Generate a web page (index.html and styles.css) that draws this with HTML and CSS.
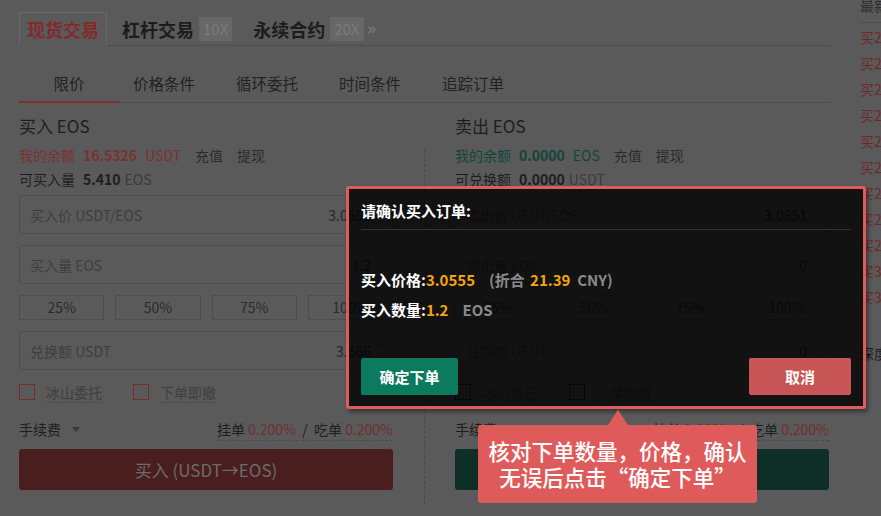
FILE: index.html
```html
<!DOCTYPE html>
<html lang="zh">

<head>
    <meta charset="utf-8">
    <meta name="viewport" content="width=device-width, initial-scale=1.0">
    <title>币币交易</title>
    <link rel="stylesheet" href="styles.css">
</head>

<body>
    <div class="page">
        <div class="trade">
            <div class="market-tabs">
                <div class="mtab on">现货交易</div>
                <div class="mtab">杠杆交易<span class="lev">10X</span></div>
                <div class="mtab wide">永续合约<span class="lev">20X</span><span class="more">»</span></div>
            </div>

            <div class="order-tabs">
                <div class="otab on">限价</div>
                <div class="otab">价格条件</div>
                <div class="otab">循环委托</div>
                <div class="otab">时间条件</div>
                <div class="otab">追踪订单</div>
            </div>

            <div class="forms">
                <section class="form buy">
                    <h2>买入 EOS</h2>
                    <p class="bal"><span class="lbl">我的余额</span><b>16.5326</b><span class="unit">USDT</span><a>充值</a><a>提现</a></p>
                    <p class="avail">可买入量<b>5.410</b><span class="grey">EOS</span></p>
                    <div class="field"><span class="ph">买入价 USDT/EOS</span><span class="val">3.0555</span><span class="spin"></span></div>
                    <div class="field"><span class="ph">买入量 EOS</span><span class="val">1.2</span><span class="spin"></span></div>
                    <div class="pcts"><span>25%</span><span>50%</span><span>75%</span><span>100%</span></div>
                    <div class="field"><span class="ph">兑换额 USDT</span><span class="val">3.666</span><span class="spin"></span></div>
                    <div class="checks">
                        <label><i></i><span>冰山委托</span></label>
                        <label><i></i><span>下单即撤</span></label>
                    </div>
                    <div class="fee">
                        <span class="fee-l">手续费<em></em></span>
                        <span class="fee-r">挂单 <span class="pc">0.200%</span> &nbsp;/&nbsp; 吃单 <span class="pc">0.200%</span></span>
                    </div>
                    <button class="submit">买入 (USDT→EOS)</button>
                </section>

                <div class="sep"></div>

                <section class="form sell">
                    <h2>卖出 EOS</h2>
                    <p class="bal"><span class="lbl">我的余额</span><b>0.0000</b><span class="unit">EOS</span><a>充值</a><a>提现</a></p>
                    <p class="avail">可兑换额<b>0.0000</b><span class="grey">USDT</span></p>
                    <div class="field"><span class="ph">卖出价 USDT/EOS</span><span class="val">3.0851</span><span class="spin"></span></div>
                    <div class="field"><span class="ph">卖出量 EOS</span><span class="val">0</span><span class="spin"></span></div>
                    <div class="pcts"><span>25%</span><span>50%</span><span>75%</span><span>100%</span></div>
                    <div class="field"><span class="ph">兑换额 USDT</span><span class="val">0</span><span class="spin"></span></div>
                    <div class="checks">
                        <label><i></i><span>冰山委托</span></label>
                        <label><i></i><span>下单即撤</span></label>
                    </div>
                    <div class="fee">
                        <span class="fee-l">手续费<em></em></span>
                        <span class="fee-r">挂单 <span class="pc">0.200%</span> &nbsp;/&nbsp; 吃单 <span class="pc">0.200%</span></span>
                    </div>
                    <button class="submit">卖出 (EOS→USDT)</button>
                </section>
            </div>
        </div>

        <aside class="latest">
            <div class="latest-head">最新成交</div>
            <ul>
                <li>买2.9871</li>
                <li>买2.9873</li>
                <li>买2.9880</li>
                <li>买2.9885</li>
                <li>买2.9890</li>
                <li>买2.9902</li>
                <li>买2.9911</li>
                <li>买2.9930</li>
                <li>买2.9954</li>
                <li>买3.0012</li>
                <li>买3.0555</li>
            </ul>
            <div class="depth">深度</div>
        </aside>
    </div>

    <div class="confirm">
        <h3>请确认买入订单:</h3>
        <p class="line">买入价格:<span class="num">3.0555</span><span class="cny">(折合 <span class="num">21.39</span>&nbsp;&nbsp;CNY)</span></p>
        <p class="line">买入数量:<span class="num">1.2</span><span class="cny">EOS</span></p>
        <div class="actions">
            <button class="ok">确定下单</button>
            <button class="cancel">取消</button>
        </div>
    </div>

    <div class="tip">核对下单数量，价格，确认<br>无误后点击“确定下单”</div>
</body>

</html>
```

FILE: styles.css
```css
body {
    margin: 0;
    width: 881px;
    height: 516px;
    overflow: hidden;
    position: relative;
    background-color: #5a5a5a;
    color: #1e1e1e;
    font-family: "Noto Sans CJK SC", "Noto Sans", sans-serif;
}

p,
h2,
h3,
ul {
    margin: 0;
    padding: 0;
}

.page {
    display: flex;
}

.trade {
    flex: none;
    width: 811px;
    margin-left: 19px;
}

/* market tabs */

.market-tabs {
    display: flex;
    align-items: flex-end;
    height: 46px;
    box-sizing: border-box;
    border-bottom: 1px solid #4d4d4d;
}

.mtab {
    display: flex;
    align-items: center;
    height: 32px;
    margin-left: 15px;
    font-size: 18px;
    font-weight: bold;
    color: #1c1c1c;
}

.mtab.wide {
    margin-left: 21px;
}

.mtab.on {
    margin-left: 0;
    margin-bottom: -1px;
    padding: 0 7px;
    height: 32px;
    border: 1px solid #686868;
    border-bottom-color: #5a5a5a;
    color: #832b2b;
}

.lev {
    margin-left: 5px;
    padding: 0 4px;
    line-height: 24px;
    font-size: 15px;
    font-weight: normal;
    background-color: #676767;
    color: #7b7b7b;
}

.more {
    margin-left: 3px;
    font-family: "DejaVu Sans", sans-serif;
    font-size: 17px;
    font-weight: normal;
    color: #7a7a7a;
}

/* order tabs */

.order-tabs {
    display: flex;
    align-items: flex-end;
    height: 56px;
    border-bottom: 1px solid #4d4d4d;
    gap: 41px;
}

.otab {
    line-height: 36px;
    border-bottom: 2px solid transparent;
    font-size: 15.5px;
    color: #222;
    margin-bottom: -1px;
}

.otab.on {
    width: 100px;
    text-align: center;
    margin-right: -27px;
    border-bottom-color: #842d2d;
}

/* forms */

.forms {
    display: flex;
}

.form {
    width: 374px;
}

.sep {
    width: 0;
    height: 355px;
    margin: 46px 30px 0 31px;
    border-left: 1px dashed #4a4a4a;
}

.form h2 {
    margin-top: 11px;
    font-size: 17px;
    font-weight: normal;
    line-height: 24px;
}

.bal {
    margin-top: 5px;
    font-size: 14px;
    line-height: 24px;
    color: #7e3030;
}

.bal b,
.avail b {
    margin-left: 8px;
}

.bal .unit {
    margin-left: 8px;
}

.bal a {
    margin-left: 14px;
    color: #2c2c2c;
}

.sell .bal {
    color: #14453a;
}

.avail {
    font-size: 14px;
    line-height: 24px;
}

.grey {
    margin-left: 4px;
    color: #3c3c3c;
}

.field {
    display: flex;
    align-items: center;
    height: 39px;
    margin-top: 11px;
    padding: 0 0 0 10px;
    box-sizing: border-box;
    border: 1px solid #4e4e4e;
    border-radius: 3px;
    font-size: 14px;
}

.avail + .field {
    margin-top: 4px;
}

.ph {
    flex: 1;
    color: #3e3e3e;
}

.val {
    color: #262626;
}

.spin {
    width: 21px;
    height: 14px;
    background:
        linear-gradient(to top right, transparent 50%, #4b4b4b 50%) 7px 0 / 3px 5px no-repeat,
        linear-gradient(to top left, transparent 50%, #4b4b4b 50%) 10px 0 / 3px 5px no-repeat,
        linear-gradient(to bottom right, transparent 50%, #4b4b4b 50%) 7px 9px / 3px 5px no-repeat,
        linear-gradient(to bottom left, transparent 50%, #4b4b4b 50%) 10px 9px / 3px 5px no-repeat;
}

.pcts {
    display: grid;
    grid-template-columns: repeat(4, 1fr);
    gap: 11px;
    margin-top: 11px;
}

.pcts span {
    height: 25px;
    line-height: 23px;
    box-sizing: border-box;
    border: 1px solid #4e4e4e;
    text-align: center;
    font-size: 14px;
    color: #2a2a2a;
}

.checks {
    display: flex;
    gap: 31px;
    margin-top: 14px;
    height: 21px;
    font-size: 14px;
}

.checks label {
    display: flex;
    align-items: flex-start;
}

.checks i {
    width: 14px;
    height: 14px;
    border: 1px solid #742c2c;
    margin-right: 11px;
}

.sell .checks i {
    border-color: #222;
}

.checks span {
    margin-top: -2px;
    line-height: 20px;
    color: #3f3f3f;
    border-bottom: 1px dashed #4a4a4a;
}

.fee {
    display: flex;
    justify-content: space-between;
    margin-top: 14px;
    font-size: 14px;
    line-height: 20px;
}

.fee-l em {
    display: inline-block;
    margin-left: 11px;
    vertical-align: 3px;
    border: 4px solid transparent;
    border-top: 5px solid #3a3a3a;
    border-bottom: 0;
}

.fee-r {
    padding-bottom: 1px;
    border-bottom: 1px dashed #4a4a4a;
}

.pc {
    color: #722f2f;
}

.submit {
    display: block;
    width: 100%;
    height: 41px;
    margin-top: 8px;
    border: 0;
    border-radius: 3px;
    background-color: #4a1e1f;
    color: #6c6c6c;
    font-family: inherit;
    font-size: 17px;
}

.sell .submit {
    background-color: #0e2f28;
    color: #3f5650;
}

/* latest trades column */

.latest {
    flex: none;
    width: 60px;
    margin-left: 30px;
    margin-top: -6px;
    font-size: 14px;
}

.latest-head {
    line-height: 22px;
    padding-bottom: 6px;
    border-bottom: 1px solid #4d4d4d;
    color: #2e2e2e;
    white-space: nowrap;
}

.latest ul {
    list-style: none;
    margin-top: 1px;
}

.latest li {
    line-height: 26px;
    color: #6e2a2a;
    white-space: nowrap;
}

.depth {
    margin-top: 30px;
    line-height: 26px;
    color: #1e1e1e;
}

/* confirm dialog */

.confirm {
    position: absolute;
    left: 346px;
    top: 186px;
    width: 520px;
    height: 223px;
    box-sizing: border-box;
    padding: 12px 12px 0;
    border: 3px solid #e05b5b;
    border-radius: 3px;
    background-color: rgba(0, 0, 0, 0.8);
    box-shadow: 2px 3px 4px rgba(0, 0, 0, 0.4);
    color: #fff;
    font-weight: bold;
    font-size: 15px;
}

.confirm h3 {
    font-size: 15px;
    line-height: 20px;
    padding-bottom: 8px;
    border-bottom: 1px solid #333;
}

.confirm .line {
    line-height: 30px;
}

.confirm h3 + .line {
    margin-top: 35px;
}

.num {
    color: #f5a50f;
}

.cny {
    margin-left: 11px;
    color: #8a8a8a;
}

.line .num + .cny {
    margin-left: 14px;
}

.cny .num {
    margin-left: 2px;
}

.actions {
    display: flex;
    justify-content: space-between;
    margin-top: 33px;
}

.actions button {
    height: 37px;
    border: 0;
    border-radius: 2px;
    color: #fff;
    font-family: inherit;
    font-size: 15px;
    font-weight: bold;
}

.ok {
    width: 97px;
    background-color: #0b7a5d;
}

.cancel {
    width: 102px;
    background-color: #c85555;
}

/* hint bubble */

.tip {
    position: absolute;
    left: 478px;
    top: 425px;
    width: 279px;
    height: 78px;
    box-sizing: border-box;
    padding-top: 13px;
    border-radius: 3px;
    background-color: #df5b5b;
    color: #fff;
    font-size: 21.5px;
    font-weight: 500;
    line-height: 26px;
    text-align: center;
}

.tip::before {
    content: "";
    position: absolute;
    left: 130px;
    top: -15px;
    border: 10px solid transparent;
    border-top: 0;
    border-bottom: 15px solid #df5b5b;
}
```
